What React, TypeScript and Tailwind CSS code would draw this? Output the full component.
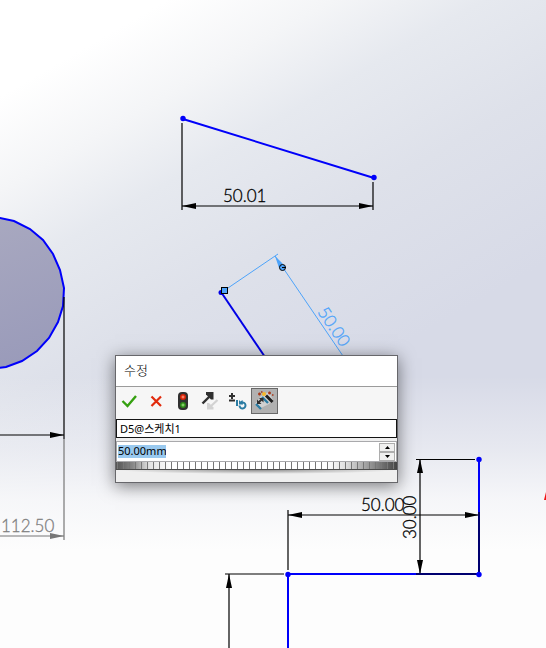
import React, { useState } from 'react';
import { clsx } from 'clsx';

const ARROWS = {
  left: '0,0 14,-3 14,3',
  right: '0,0 -14,-3 -14,3',
  up: '0,0 -3,14 3,14',
  down: '0,0 -3,-14 3,-14',
};

function Arrow({ x, y, dir, color = '#000' }: { x: number; y: number; dir: keyof typeof ARROWS; color?: string }) {
  return <polygon points={ARROWS[dir]} transform={`translate(${x} ${y})`} fill={color} />;
}

function Label({ x, y, angle = 0, color = '#000', children }: { x: number; y: number; angle?: number; color?: string; children: string }) {
  return (
    <text transform={`translate(${x} ${y}) rotate(${angle})`} fill={color} stroke={color} strokeWidth="0.3">
      {children}
    </text>
  );
}

function Sketch() {
  return (
    <svg
      className="absolute inset-0 h-full w-full font-['Lato','Liberation_Sans',sans-serif] text-[17px] font-light"
      role="img"
      aria-label="Sketch"
    >
      <defs>
        <linearGradient id="disc" x1="0" y1="0" x2="0.2" y2="1">
          <stop offset="0" stopColor="#a9a9c0" />
          <stop offset="1" stopColor="#9a9bba" />
        </linearGradient>
      </defs>

      {/* circle on the left edge */}
      <polygon
        points="-20,216 0,218 14,221 30,229 43,240 53,254 60,270 64,288 63,306 58,322 49,338 37,351 22,361 6,367 -20,370"
        fill="url(#disc)"
        stroke="#0000fa"
        strokeWidth="2"
      />
      <g stroke="#000" strokeWidth="1.2">
        <path d="M64 297V439M0 435H64" />
        <path d="M64 439V540M0 536H64" stroke="#777" />
      </g>
      <Arrow x={64} y={435} dir="right" />
      <Arrow x={64} y={536} dir="right" color="#777" />
      <Label x={1} y={532} color="#808080">112.50</Label>

      {/* sloped line */}
      <path d="M182 123V210M373 182V210M182 206H373" stroke="#000" strokeWidth="1.2" />
      <Arrow x={182} y={206} dir="left" />
      <Arrow x={373} y={206} dir="right" />
      <path d="M183 119L374 178" stroke="#0000fa" strokeWidth="2" />
      <circle cx="183" cy="118.500" r="2.700" fill="#0000fa" />
      <circle cx="374" cy="177.500" r="2.700" fill="#0000fa" />
      <Label x={223} y={202}>50.01</Label>

      {/* dimension being edited */}
      <path d="M221 292L265 357" stroke="#0000e6" strokeWidth="2" />
      <circle cx="221" cy="292.500" r="2.500" fill="#0000e6" />
      <path d="M228 288L278 254M275 256L343 356" stroke="#4da3fa" />
      <polygon points="275,256 283,264 279,268" fill="#4da3fa" />
      <rect x="221.500" y="287.500" width="6" height="6" fill="#4da3fa" stroke="#000" />
      <circle cx="282.500" cy="267.500" r="3" fill="#4da3fa" stroke="#000" />
      <path d="M282 267.500H286" stroke="#000" />
      <Label x={317} y={312} angle={56} color="#4da3fa">50.00</Label>

      {/* step profile */}
      <path d="M288 510V570M288 515H479M420 460V574M225 574H284M229 574V648" stroke="#000" strokeWidth="1.2" />
      <path d="M416 459.500H475" stroke="#000" />
      <path d="M288 648V574H479V459" fill="none" stroke="#0000fa" strokeWidth="2" />
      <path d="M416 574H479V512" fill="none" stroke="#000070" strokeWidth="2" />
      <Arrow x={288} y={515} dir="left" />
      <Arrow x={479} y={515} dir="right" />
      <Arrow x={420} y={459} dir="up" />
      <Arrow x={420} y={574} dir="down" />
      <Arrow x={229} y={574} dir="up" />
      <circle cx="479" cy="459.500" r="2.700" fill="#0000fa" />
      <circle cx="479" cy="574.500" r="2.700" fill="#0000fa" />
      <circle cx="288" cy="574.500" r="2.700" fill="#0000fa" />
      <Label x={361} y={511}>50.00</Label>
      <Label x={416} y={539} angle={-90}>30.00</Label>

      <polygon points="544,500 546,492 548,492 548,500" fill="#f01010" />
    </svg>
  );
}

const TOOLS = [
  {
    label: '확인',
    icon: <path d="M6.500 13L11.500 18L20 8" fill="none" stroke="#35a010" strokeWidth="2.400" />,
  },
  {
    label: '취소',
    icon: <path d="M8.500 8.500L18 18M18 8.500L8.500 18" stroke="#e12a0c" strokeWidth="2.200" />,
  },
  {
    label: '재생성',
    icon: (
      <>
        <rect x="8" y="4" width="10" height="18" rx="4" fill="#303030" />
        <circle cx="13" cy="9" r="3" fill="#d92208" />
        <circle cx="13" cy="17" r="3" fill="#2c8a18" />
        <path d="M13 7.500V10.500M11.500 9H14.500" stroke="#ffa080" />
        <path d="M13 15.500V18.500M11.500 17H14.500" stroke="#a0e080" />
      </>
    ),
  },
  {
    label: '방향 반전',
    icon: (
      <>
        <path d="M20.500 12L13 19" stroke="#d2d2d2" strokeWidth="2.200" />
        <polygon points="10,21.500 10,15 12,15 16.500,19.500 16.500,21.500" fill="#d2d2d2" />
        <path d="M5.500 15.500L13.500 7.500" stroke="#303030" strokeWidth="2.400" />
        <polygon points="9,4 16.500,4 16.500,11.500 14,11.500 9,6.500" fill="#303030" />
      </>
    ),
  },
  {
    label: '증분 값 재설정',
    icon: (
      <>
        <path d="M8 5V11M5 8H11M5 12.500H11" stroke="#303030" strokeWidth="2" />
        <path d="M13 12V18" stroke="#2b7ca3" strokeWidth="2" />
        <path d="M15.500 17.500A3 3 0 1 0 18 14.500" fill="none" stroke="#2b7ca3" strokeWidth="2" />
        <polygon points="15,12 16.500,13.500 18.500,12 19,16.500 15,16.500" fill="#2b7ca3" />
      </>
    ),
  },
  {
    label: '치수 표시',
    icon: (
      <>
        <path d="M4 16L10 8L18 4L22 12L18 16L10 20L6 18Z" fill="#dedede" opacity="0.700" />
        <path d="M5 16L10 21M11 9L17 15" stroke="#2b7ca3" strokeWidth="2.400" />
        <path d="M7 15L11 11" stroke="#303030" strokeWidth="2" />
        <path d="M6 11.500V16H10.500ZM8 10H12.500V14.500Z" fill="#303030" />
        <path d="M15 7.500L21.500 14" stroke="#202020" strokeWidth="3" />
        <circle cx="13" cy="6" r="2" fill="#f5b82a" />
        <path d="M7 6H10M8.500 4.500V7.500M17 5H20M18.500 3.500V6.500M21 7H22.500M10 4H11.500" stroke="#a8381a" strokeWidth="1.400" />
      </>
    ),
  },
];

export default function App() {
  const [name, setName] = useState('D5@스케치1');
  const [value, setValue] = useState('50.00mm');
  const [pressed, setPressed] = useState(true);

  const step = (delta: number) => {
    const n = parseFloat(value) || 0;
    setValue(`${(n + delta).toFixed(2)}mm`);
  };

  return (
    <main className="relative min-h-screen overflow-hidden bg-[linear-gradient(180deg,#fdfdfd00_58%,#fdfdfd66_69%,#fdfdfdcc_77%,#fdfdfd_85%),linear-gradient(150deg,#ffffff_10%,#f4f5f7_20%,#e6e9ef_29%,#dee1ea_42%,#d7dae7_60%)]">
      <Sketch />

      <section
        role="dialog"
        aria-labelledby="dialog-title"
        className="absolute top-[355px] left-[115px] w-[283px] border border-[#67676b] bg-[#efefef] font-['Noto_Sans','Noto_Sans_CJK_KR',sans-serif] text-[11px] text-black shadow-[0_3px_16px_rgba(0,0,0,0.5)]"
      >
        <h1 id="dialog-title" className="flex h-[31px] items-center border-b border-[#9b9b9b] bg-white px-2 text-[13px] font-light">
          수정
        </h1>

        <div className="flex h-8 bg-[#f6f6f6] pt-px">
          {TOOLS.map((tool, i) => {
            const toggle = i === TOOLS.length - 1;
            return (
              <button
                key={tool.label}
                type="button"
                title={tool.label}
                aria-label={tool.label}
                aria-pressed={toggle ? pressed : undefined}
                onClick={toggle ? () => setPressed(!pressed) : undefined}
                className={clsx(
                  'flex h-[26px] w-[27px] items-center justify-center',
                  toggle && pressed && 'bg-[#b1b1b1] outline outline-1 -outline-offset-1 outline-[#686868]'
                )}
              >
                <svg width="27" height="26" viewBox="0 0 27 26" aria-hidden="true">
                  {tool.icon}
                </svg>
              </button>
            );
          })}
        </div>

        <input
          aria-label="치수 이름"
          value={name}
          onChange={(e) => setName(e.target.value)}
          className="block h-[19px] w-full border border-[#141414] bg-white px-[3px] pb-0.5 outline-none"
        />

        <div className="mt-[3px] flex h-[21px] items-center border border-[#a9a9ac] bg-white px-px">
          <input
            aria-label="치수 값"
            value={value}
            onChange={(e) => setValue(e.target.value)}
            className="h-[13px] w-12 bg-[#99c9ef] pb-0.5 leading-none outline-none"
          />
          <div className="ml-auto flex w-4 flex-col">
            <button
              type="button"
              aria-label="증가"
              onClick={() => step(10)}
              className="flex h-[9px] items-center justify-center border border-[#adadad] bg-[#f0f0f0]"
            >
              <svg width="5" height="3" aria-hidden="true">
                <polygon points="0,3 2.500,0 5,3" />
              </svg>
            </button>
            <button
              type="button"
              aria-label="감소"
              onClick={() => step(-10)}
              className="flex h-[9px] items-center justify-center border border-[#adadad] bg-[#f0f0f0]"
            >
              <svg width="5" height="3" aria-hidden="true">
                <polygon points="0,0 2.500,3 5,0" />
              </svg>
            </button>
          </div>
        </div>

        {/* thumb wheel */}
        <div className="h-2 border-b border-[#4c4c4c] bg-[repeating-linear-gradient(90deg,#77777700_0_1px,#777777_1px_2px,#77777700_2px_6px),linear-gradient(90deg,#555555,#888888_6%,#e4e4e4_12%,#ffffff_20%,#ffffff_75%,#dddddd_82%,#888888_92%,#444444)]" />
        <div className="h-3 bg-[radial-gradient(ellipse_at_top,#909090,#efefef_70%)] bg-[length:100%_4px] bg-no-repeat" />
      </section>
    </main>
  );
}
